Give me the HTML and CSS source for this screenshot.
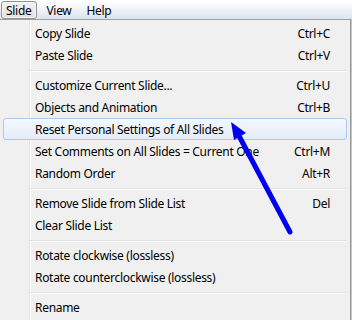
FILE: index.html
```html
<!DOCTYPE html>
<html>
<head>
    <title>Slide menu</title>
<link rel="stylesheet" href="styles.css">
</head>
<body>
    <div class="menubar">
        <span class="menubar-item open">Slide</span>
        <span class="menubar-item">View</span>
        <span class="menubar-item">Help</span>
    </div>

    <div class="menu">
        <div class="item"><span>Copy Slide</span><span>Ctrl+C</span></div>
        <div class="item"><span>Paste Slide</span><span>Ctrl+V</span></div>
        <div class="sep"></div>
        <div class="item"><span>Customize Current Slide...</span><span>Ctrl+U</span></div>
        <div class="item"><span>Objects and Animation</span><span>Ctrl+B</span></div>
        <div class="item hover"><span>Reset Personal Settings of All Slides</span><span></span></div>
        <div class="item"><span>Set Comments on All Slides = Current One</span><span>Ctrl+M</span></div>
        <div class="item"><span>Random Order</span><span>Alt+R</span></div>
        <div class="sep"></div>
        <div class="item"><span>Remove Slide from Slide List</span><span>Del</span></div>
        <div class="item"><span>Clear Slide List</span><span></span></div>
        <div class="sep"></div>
        <div class="item"><span>Rotate clockwise (lossless)</span><span></span></div>
        <div class="item"><span>Rotate counterclockwise (lossless)</span><span></span></div>
        <div class="sep"></div>
        <div class="item"><span>Rename</span><span></span></div>

        <!-- annotation arrow drawn over the menu -->
        <svg class="arrow" width="352" height="301" viewBox="0 19 352 301">
            <line x1="290" y1="232" x2="238" y2="134" stroke="#0000f0" stroke-width="5" stroke-linecap="round"/>
            <polygon points="231,122 246,133 234,140" fill="#0000f0"/>
        </svg>
    </div>
</body>
</html>
```

FILE: styles.css
```css
/* Global Styles */
body {
    margin: 0;
    padding: 0;
    background-color: #f0f0f0;
    font-family: "Noto Sans", "Open Sans", sans-serif;
    font-size: 12px;
    letter-spacing: -0.3px;
    color: #000;
}

/* Menu bar */
.menubar {
    display: flex;
    height: 19px;
    padding: 1px 0 0 1px;
    box-sizing: border-box;
    background: linear-gradient(to bottom, #ffffff, #f6f8fb 30%, #dde4f0);
}

.menubar-item {
    padding: 0 5px 0 4px;
    margin-right: 4px;
    height: 16px;
    line-height: 17px;
    border: 1px solid transparent;
    border-radius: 3px;
}

.menubar-item.open {
    border-color: #8e8f8f;
    background: linear-gradient(to bottom, #f2f2f2, #e2e2e2);
    box-shadow: inset 0 0 0 1px #fafafa;
}

/* Popup menu */
.menu {
    position: relative;
    width: 351px;
    height: 301px;
    box-sizing: border-box;
    padding-top: 2px;
    border-top: 1px solid #a0a0a0;
    border-right: 1px solid #979797;
    box-shadow: 1px 0 0 #c4c4c4;
    background:
        linear-gradient(to right, transparent 29px, #e2e3e3 29px, #e2e3e3 30px, #ffffff 30px, #ffffff 31px, transparent 31px),
        #f0f0f0;
}

.item {
    display: flex;
    justify-content: space-between;
    height: 22px;
    line-height: 21px;
    box-sizing: border-box;
    margin: 0 3px;
    padding: 0 16px 0 31px;
    border: 1px solid transparent;
    border-radius: 3px;
    white-space: nowrap;
}

.item.hover {
    border-color: #a8cbf1;
    background: linear-gradient(to bottom, #f4f8fd, #e3edf9);
}

.sep {
    height: 0;
    margin: 4px 4px 2px 30px;
    border-top: 1px solid #e0e0e0;
    border-bottom: 1px solid #ffffff;
}

.arrow {
    position: absolute;
    left: 0;
    top: -1px;
    pointer-events: none;
}
```
